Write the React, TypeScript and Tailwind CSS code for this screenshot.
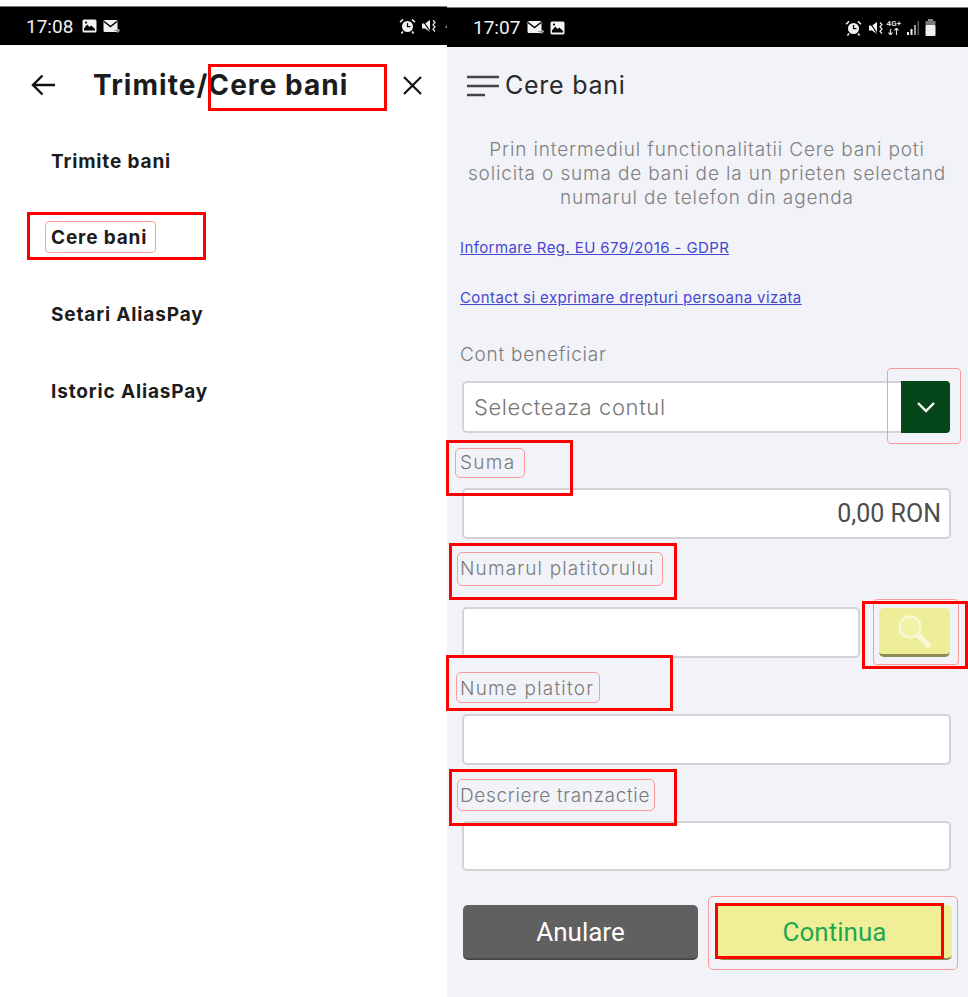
const M = { fontFamily: "Inter, 'Liberation Sans', sans-serif" };
const R = { fontFamily: "Roboto, 'Liberation Sans', sans-serif" };

function ImageIcon() {
  return (
    <svg width="15" height="14" viewBox="0 0 15 14" fill="none">
      <rect x="0.5" y="0.5" width="14" height="13" rx="1.5" fill="#f2f2f2" />
      <path d="M2 9.5 5.2 5.5 7.5 8 9.2 6.5 13 10v1.5H2z" fill="#000" />
      <circle cx="4" cy="3.6" r="1.1" fill="#000" />
    </svg>
  );
}

function MailIcon() {
  return (
    <svg width="18" height="15" viewBox="0 0 18 15" fill="none">
      <rect x="0.5" y="1" width="14" height="12" rx="1.5" fill="#f2f2f2" />
      <path d="M1 2.5 7.5 7.5 14 2.5" stroke="#000" strokeWidth="1.5" />
      <path d="M11 11.5h5M14 9.5l2.5 2-2.5 2" stroke="#9a9a9a" strokeWidth="1.2" />
    </svg>
  );
}

function AlarmIcon() {
  return (
    <svg width="17" height="16" viewBox="0 0 17 16" fill="none">
      <circle cx="8.5" cy="8.5" r="5.5" fill="#f2f2f2" />
      <path d="M8.5 5v3.6h3" stroke="#000" strokeWidth="1.3" />
      <path d="M1 4.2 4 1.4M16 4.2 13 1.4M4 13.5l-1.6 2M13 13.5l1.6 2" stroke="#f2f2f2" strokeWidth="1.5" />
    </svg>
  );
}

function MuteIcon() {
  return (
    <svg width="16" height="16" viewBox="0 0 16 16" fill="none">
      <path d="M1 5.5h3L9 2v12L4 10.5H1z" fill="#f2f2f2" />
      <path d="M1.5 2 9.5 14" stroke="#000" strokeWidth="1.2" />
      <path d="M12 2.5l2 2-2 2.2 2 2.3-2 2.2 2 2.3" stroke="#f2f2f2" strokeWidth="1.2" />
    </svg>
  );
}

function StatusBarLeft() {
  return (
    <div className="relative h-[39px] bg-black border-t border-[#777] flex items-center overflow-hidden">
      <span className="ml-[26px] pt-[2px] text-[19px] text-[#f2f2f2]" style={R}>17:08</span>
      <span className="ml-[9px]"><ImageIcon /></span>
      <span className="ml-[6px]"><MailIcon /></span>
      <span className="ml-auto flex items-center gap-[5px] mr-[-1px]">
        <AlarmIcon />
        <MuteIcon />
        <span className="text-[13px] text-[#888] w-[3px] overflow-hidden ml-[3px]" style={R}>4</span>
      </span>
    </div>
  );
}

function StatusBarRight() {
  return (
    <div className="h-[40px] bg-black border-t border-[#777] flex items-center">
      <span className="ml-[26px] pt-[2px] text-[19px] text-[#f2f2f2]" style={R}>17:07</span>
      <span className="ml-[7px]"><MailIcon /></span>
      <span className="ml-[5px]"><ImageIcon /></span>
      <span className="ml-auto mr-[32px] flex items-center">
        <AlarmIcon />
        <span className="ml-[6px]"><MuteIcon /></span>
        <span className="ml-[3px] flex flex-col items-center text-[8px] leading-[8px] font-bold text-[#ddd]" style={R}>
          <span>4G+</span>
          <svg width="13" height="7" viewBox="0 0 13 7" fill="none">
            <path d="M3.5 7V1M1.5 4.5 3.5 7l2-2.5M9.5 0v7M7.5 2.5 9.5 0l2 2.5" stroke="#ddd" strokeWidth="1.2" />
          </svg>
        </span>
        <svg className="ml-[6px]" width="13" height="14" viewBox="0 0 13 14" fill="none">
          <rect x="0" y="11" width="2" height="3" fill="#eee" />
          <rect x="3.5" y="8" width="2" height="6" fill="#eee" />
          <rect x="7" y="4" width="2" height="10" fill="#999" />
          <rect x="10.5" y="0" width="1.6" height="14" fill="#555" />
        </svg>
        <svg className="ml-[5px]" width="11" height="17" viewBox="0 0 11 17" fill="none">
          <rect x="3" y="0" width="5" height="2.5" fill="#888" />
          <rect x="0.5" y="2" width="10" height="4" fill="#777" />
          <rect x="0.5" y="6" width="10" height="11" rx="1" fill="#eee" />
        </svg>
      </span>
    </div>
  );
}

function Field({ right }: { right?: string }) {
  return (
    <div className="h-[51px] rounded-[5px] border-2 border-[#d2d3d6] bg-white flex items-center justify-end pr-[8px]">
      {right && <span className="text-[25px] pt-[1px] text-[#4c4c4c]" style={R}>{right}</span>}
    </div>
  );
}

function Label({ text, className }: { text: string; className: string }) {
  return (
    <div className={`h-[24px] pt-[1px] leading-[24px] text-[19px] font-light text-[#7c7c7c] ml-[13px] ${className}`} style={M}>
      {text}
    </div>
  );
}

function MenuItem({ text, className }: { text: string; className: string }) {
  return (
    <div className={`ml-[51px] h-[26px] pt-[1px] leading-[26px] text-[19px] font-bold text-[#1c1c1c] tracking-[0.85px] ${className}`} style={M}>
      {text}
    </div>
  );
}

export default function App() {
  return (
    <div className="relative w-[968px] h-[997px] bg-white flex overflow-hidden">
      <div className="w-[447px] shrink-0 flex flex-col">
        <div className="h-[6px]" />
        <StatusBarLeft />
        <div className="h-[80px] flex items-center mt-0">
          <svg className="ml-[31px]" width="25" height="22" viewBox="0 0 25 22" fill="none">
            <path d="M24 11H2M11.5 1.5 2 11l9.5 9.5" stroke="#111" strokeWidth="2.4" />
          </svg>
          <span className="ml-[37px] text-[28px] font-bold text-[#1c1c1c] whitespace-nowrap tracking-[1.05px]" style={M}>Trimite/Cere bani</span>
          <svg className="ml-auto mr-[24px]" width="21" height="21" viewBox="0 0 21 21" fill="none">
            <path d="M2 2l17 17M19 2 2 19" stroke="#111" strokeWidth="2.2" />
          </svg>
        </div>
        <MenuItem text="Trimite bani" className="mt-[23px]" />
        <MenuItem text="Cere bani" className="mt-[50px]" />
        <MenuItem text="Setari AliasPay" className="mt-[51px]" />
        <MenuItem text="Istoric AliasPay" className="mt-[51px]" />
      </div>

      <div className="flex-1 flex flex-col bg-[#f1f3f8]">
        <div className="h-[7px] bg-white" />
        <StatusBarRight />
        <div className="h-[78px] flex items-center pl-[20px]">
          <svg width="32" height="22" viewBox="0 0 32 22" fill="none">
            <path d="M0 2h32M0 11h32M0 20h18" stroke="#444" strokeWidth="2.4" />
          </svg>
          <span className="ml-[6px] text-[25px] text-[#2a2a2a] tracking-[0.75px]" style={M}>Cere bani</span>
        </div>
        <div className="mt-[12px] pt-[1px] h-[72px] text-center text-[19px] leading-[24px] font-light text-[#808080] tracking-[0.85px] ml-[13px] w-[494px] whitespace-nowrap" style={M}>
          <div>Prin intermediul functionalitatii Cere bani poti</div>
          <div>solicita o suma de bani de la un prieten selectand</div>
          <div>numarul de telefon din agenda</div>
        </div>
        <a className="mt-[27px] ml-[13px] h-[24px] leading-[24px] text-[15px] underline text-[#4646d2] tracking-[0.4px]" style={M}>Informare Reg. EU 679/2016 - GDPR</a>
        <a className="mt-[26px] ml-[13px] h-[24px] leading-[24px] text-[15px] underline text-[#4646d2] tracking-[0.4px]" style={M}>Contact si exprimare drepturi persoana vizata</a>
        <Label text="Cont beneficiar" className="mt-[32px] tracking-[0.75px]" />
        <div className="mt-[15px] ml-[15px] w-[488px] h-[52px] flex">
          <div className="flex-1 rounded-l-[5px] border-2 border-r-0 border-[#d2d3d6] bg-white flex items-center pl-[10px] text-[22px] font-light text-[#777] tracking-[0.6px]" style={M}>
            Selecteaza contul
          </div>
          <div className="w-[49px] bg-[#05461b] rounded-r-[4px] flex items-center justify-center">
            <svg width="20" height="12" viewBox="0 0 20 12" fill="none">
              <path d="M2 2l8 8 8-8" stroke="#fff" strokeWidth="2.4" />
            </svg>
          </div>
        </div>
        <Label text="Suma" className="mt-[17px] tracking-[1.3px]" />
        <div className="mt-[14px] mx-[15px] w-[489px]"><Field right="0,00 RON" /></div>
        <Label text="Numarul platitorului" className="mt-[17px] tracking-[1.15px]" />
        <div className="mt-[27px] ml-[15px] w-[489px] flex">
          <div className="w-[398px]"><Field /></div>
          <div className="ml-[19px] w-[71px] h-[49px] mt-px rounded-[5px] bg-[#eeee98] border-b-[3px] border-[#8c8c55] flex items-center justify-center">
            <svg width="40" height="40" viewBox="0 0 40 40" fill="none">
              <circle cx="15" cy="16" r="10.5" fill="#f1f1a8" stroke="#f8f8d4" strokeWidth="2.5" />
              <path d="M24 25l9 9" stroke="#f8f8d4" strokeWidth="5.5" strokeLinecap="round" />
            </svg>
          </div>
        </div>
        <Label text="Nume platitor" className="mt-[18px] tracking-[1.2px]" />
        <div className="mt-[14px] ml-[15px] w-[489px]"><Field /></div>
        <Label text="Descriere tranzactie" className="mt-[18px] tracking-[0.65px]" />
        <div className="mt-[14px] ml-[15px] w-[489px] h-[50px] rounded-[5px] border-2 border-[#d2d3d6] bg-white" />
        <div className="mt-[34px] ml-[16px] flex gap-[19px]">
          <div className="w-[235px] h-[55px] pt-[2px] rounded-[5px] bg-[#606060] border-b-2 border-[#484848] flex items-center justify-center text-[26px] text-white" style={R}>Anulare</div>
          <div className="w-[235px] h-[55px] pt-[2px] rounded-[5px] bg-[#f0ef98] border-b-2 border-[#8c8c55] flex items-center justify-center text-[26px] text-[#1fa750]" style={R}>Continua</div>
        </div>
      </div>

      {/* thin annotation outlines */}
      <div className="absolute left-[45px] top-[221px] w-[111px] h-[32px] rounded-[4px] border border-[#ff9a9a]" />
      <div className="absolute left-[887px] top-[368px] w-[74px] h-[76px] rounded-[4px] border border-[#ff9a9a]" />
      <div className="absolute left-[455px] top-[448px] w-[70px] h-[30px] rounded-[5px] border border-[#ff9a9a]" />
      <div className="absolute left-[457px] top-[552px] w-[206px] h-[34px] rounded-[5px] border border-[#ff9a9a]" />
      <div className="absolute left-[873px] top-[599px] w-[86px] h-[66px] rounded-[4px] border border-[#ff9a9a]" />
      <div className="absolute left-[456px] top-[672px] w-[144px] h-[31px] rounded-[5px] border border-[#ff9a9a]" />
      <div className="absolute left-[457px] top-[779px] w-[198px] h-[32px] rounded-[5px] border border-[#ff9a9a]" />
      <div className="absolute left-[708px] top-[896px] w-[250px] h-[74px] rounded-[5px] border border-[#ff9a9a]" />

      {/* red annotation boxes */}
      <div className="absolute left-[208px] top-[64px] w-[179px] h-[47px] border-[3px] border-[#ff0000]" />
      <div className="absolute left-[27px] top-[212px] w-[179px] h-[48px] border-[3px] border-[#ff0000]" />
      <div className="absolute left-[446px] top-[440px] w-[127px] h-[56px] border-[3px] border-[#ff0000]" />
      <div className="absolute left-[449px] top-[543px] w-[228px] h-[57px] border-[3px] border-[#ff0000]" />
      <div className="absolute left-[862px] top-[601px] w-[106px] h-[68px] border-[3px] border-[#ff0000]" />
      <div className="absolute left-[446px] top-[655px] w-[227px] h-[56px] border-[3px] border-[#ff0000]" />
      <div className="absolute left-[449px] top-[769px] w-[228px] h-[57px] border-[3px] border-[#ff0000]" />
      <div className="absolute left-[715px] top-[903px] w-[229px] h-[56px] border-[3px] border-[#ff0000]" />
    </div>
  );
}
